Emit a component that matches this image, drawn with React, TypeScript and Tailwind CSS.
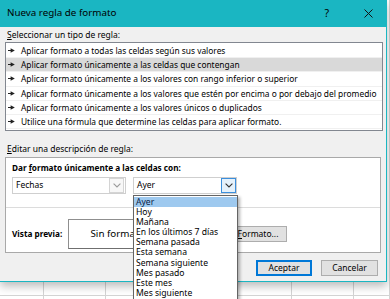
import React from "react";

const rules = [
  "Aplicar formato a todas las celdas según sus valores",
  "Aplicar formato únicamente a las celdas que contengan",
  "Aplicar formato únicamente a los valores con rango inferior o superior",
  "Aplicar formato únicamente a los valores que estén por encima o por debajo del promedio",
  "Aplicar formato únicamente a los valores únicos o duplicados",
  "Utilice una fórmula que determine las celdas para aplicar formato.",
];

const dates = [
  "Ayer",
  "Hoy",
  "Mañana",
  "En los últimos 7 días",
  "Semana pasada",
  "Esta semana",
  "Semana siguiente",
  "Mes pasado",
  "Este mes",
  "Mes siguiente",
];

function Arrow() {
  return (
    <svg width="7" height="5" viewBox="0 0 7 5" className="shrink-0">
      <path d="M0 2.5h3.5" stroke="#222" strokeWidth="1" />
      <path d="M2.6 0.3 L6.8 2.5 L2.6 4.7Z" fill="#222" />
    </svg>
  );
}

function Chevron({ color }: { color: string }) {
  return (
    <svg width="8" height="5" viewBox="0 0 8 5">
      <path d="M0.6 0.6 L4 4 L7.4 0.6" fill="none" stroke={color} strokeWidth="1.1" />
    </svg>
  );
}

export default function App() {
  return (
    <div className="relative w-[390px] h-[299px] overflow-hidden bg-white font-['Noto_Sans',sans-serif] text-black">
      {/* worksheet behind the dialog */}
      <div className="absolute inset-0 flex">
        {[44, 62, 62, 62, 62, 62, 36].map((w, i) => (
          <div key={i} className="h-full border-r border-[#d4d4d4]" style={{ width: w }} />
        ))}
      </div>
      <div className="absolute left-0 right-0 top-[295px] border-t border-[#d4d4d4]" />

      {/* dialog */}
      <div className="absolute left-0 top-0 w-[387px] h-[282px] flex flex-col bg-[#f0f0f0] border-r border-b border-[#1ab6c2] shadow-[0_4px_9px_rgba(0,0,0,0.28)]">
        {/* title bar */}
        <div className="h-[27px] shrink-0 flex items-center bg-[#1ab6c2] pl-[7px] text-[9.8px]">
          <span>Nueva regla de formato</span>
          <span className="ml-auto text-[10.5px] mr-[35px]">?</span>
          <svg width="9" height="9" viewBox="0 0 9 9" className="mr-[13px]">
            <path d="M0.5 0.5 L8.5 8.5 M8.5 0.5 L0.5 8.5" stroke="#111" strokeWidth="1" />
          </svg>
        </div>

        <div className="flex-1 flex flex-col px-[5px] text-[8.5px]">
          <div className="mt-[1px] leading-[13px] pl-[2px]">
            <span className="underline">S</span>eleccionar un tipo de regla:
          </div>

          {/* rule type list */}
          <div className="mt-[1px] h-[89px] w-[378px] border border-[#828790] bg-white py-[1px]">
            {rules.map((r, i) => (
              <div
                key={i}
                className={
                  "h-[14.2px] flex items-center gap-[6px] pl-[2px] leading-[13px] text-[8.4px] whitespace-nowrap border-b border-[#f0f0f0] " +
                  (i === 1 ? "bg-[#d9d9d9]" : "")
                }
              >
                <Arrow />
                <span>{r}</span>
              </div>
            ))}
          </div>

          <div className="mt-[12px] leading-[12px] pl-[2px]">
            <span className="underline">E</span>ditar una descripción de regla:
          </div>

          {/* rule description */}
          <div className="mt-[2px] w-[376px] h-[96px] border border-[#a9a9a9] bg-white flex flex-col">
            <div className="h-[50px] border-b border-[#dcdcdc] px-[6px] pt-[4px]">
              <div className="leading-[12px] font-bold text-[8.2px]">
                Dar <span className="underline">f</span>ormato únicamente a las celdas con:
              </div>
              <div className="mt-[3px] flex gap-[7px]">
                <div className="w-[114px] h-[17px] border border-[#cfcfcf] bg-white flex items-center">
                  <span className="pl-[3px] flex-1">Fechas</span>
                  <div className="w-[15px] h-[15px] mr-[1px] border border-[#d4d4d4] bg-[#f7f7f7] flex items-center justify-center">
                    <Chevron color="#9a9a9a" />
                  </div>
                </div>
                <div className="relative w-[104px] h-[17px] border border-[#cfcfcf] bg-white flex items-center">
                  <span className="pl-[3px] flex-1">Ayer</span>
                  <div className="w-[15px] h-[15px] border border-[#3c8fdc] bg-[#e5f1fb] flex items-center justify-center">
                    <Chevron color="#333" />
                  </div>
                  {/* open dropdown list */}
                  <div className="absolute left-[-1px] top-[17px] z-10 w-[105px] border border-[#646464] bg-white shadow-[2px_2px_3px_rgba(0,0,0,0.3)] py-[0.5px]">
                    {dates.map((d, i) => (
                      <div
                        key={d}
                        className={
                          "h-[10.2px] leading-[10px] pl-[2px] text-[8.6px] whitespace-nowrap " +
                          (i === 0 ? "bg-[#9ec9ef] text-[#0b1d45]" : "")
                        }
                      >
                        {d}
                      </div>
                    ))}
                  </div>
                </div>
              </div>
            </div>

            <div className="h-[44px] px-[6px] pt-[11px]">
              <div className="h-[30px] flex items-center">
                <span className="w-[56px] font-bold text-[8.2px] whitespace-nowrap">Vista previa:</span>
                <div className="w-[154px] h-[30px] border border-[#8f8f8f] border-b-[#6f6f6f] flex items-center justify-center text-[9.8px]">
                  Sin formato establecido
                </div>
                <div className="ml-[7px] w-[58px] h-[16px] border border-[#adadad] bg-[#e1e1e1] flex items-center justify-center">
                  <span>
                    <span className="underline">F</span>ormato...
                  </span>
                </div>
              </div>
            </div>
          </div>

          {/* buttons */}
          <div className="mt-[7px] flex justify-end gap-[9px] pr-[3px]">
            <div className="w-[56px] h-[16px] border-2 border-[#0078d7] bg-[#e1e1e1] flex items-center justify-center">
              Aceptar
            </div>
            <div className="w-[57px] h-[16px] border border-[#adadad] bg-[#e1e1e1] flex items-center justify-center">
              Cancelar
            </div>
          </div>
        </div>
      </div>
    </div>
  );
}
